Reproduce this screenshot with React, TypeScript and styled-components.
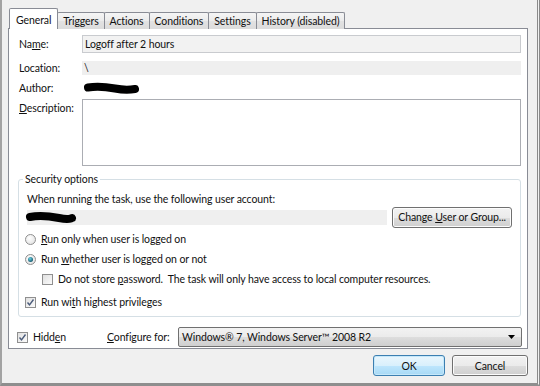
import styled, { createGlobalStyle } from "styled-components";

const GlobalStyle = createGlobalStyle`
  html, body { margin: 0; padding: 0; }
  body {
    font-family: Lato, "Noto Sans", sans-serif;
    font-size: 10.5px;
    letter-spacing: -0.1px;
    color: #111;
  }
  * { box-sizing: border-box; }
`;

const Frame = styled.div`
    width: 540px;
    height: 386px;
    background: #f0f0f0;
    border-left: 2px solid #a3a3a3;
    border-right: 3px double #8a8a8a;
    border-bottom: 3px solid #8e8e8e;
    padding-top: 8px;
    display: flex;
    flex-direction: column;
`;

const TabStrip = styled.div`
    display: flex;
    align-items: flex-end;
    height: 21px;
    margin-left: 7px;
`;

const Tab = styled.div<{ $active?: boolean }>`
    position: relative;
    height: ${(p) => (p.$active ? "21px" : "17px")};
    padding: ${(p) => (p.$active ? "1px 6px 0" : "0 5px")};
    margin-left: -1px;
    display: flex;
    align-items: center;
    border: 1px solid #898c95;
    border-bottom: none;
    border-radius: 2px 2px 0 0;
    background: ${(p) => (p.$active ? "#fff" : "linear-gradient(#f5f5f5, #ebebeb 50%, #e2e2e2 51%, #dcdcdc)")};
    z-index: ${(p) => (p.$active ? 2 : 1)};
    color: #111;
    white-space: nowrap;
    &:first-child { margin-left: 0; }
`;

const Panel = styled.div`
    position: relative;
    margin: -1px 0 0 6px;
    width: 520px;
    height: 321px;
    border: 1px solid #898c95;
    background: #fff;
    padding: 6px 6px 0 10px;
    display: flex;
    flex-direction: column;
`;

const FormRow = styled.div<{ $h: number; $mt?: number; $top?: boolean }>`
    display: grid;
    grid-template-columns: 63px 1fr;
    align-items: ${(p) => (p.$top ? "start" : "center")};
    height: ${(p) => p.$h}px;
    margin-top: ${(p) => p.$mt || 0}px;
`;

const Label = styled.label<{ $pt?: number }>`
    padding-top: ${(p) => p.$pt || 0}px;
    white-space: nowrap;
`;

const TextField = styled.div`
    height: 18px;
    border: 1px solid #c9cbcf;
    background: #f2f2f2;
    padding: 0 2px;
    display: flex;
    align-items: center;
`;

const ReadOnly = styled.div<{ $h: number }>`
    height: ${(p) => p.$h}px;
    background: #efefef;
    display: flex;
    align-items: center;
    padding: 0 2px;
`;

const TextArea = styled.div`
    height: 67px;
    border: 1px solid #abadb3;
    background: #fff;
`;

const Group = styled.fieldset`
    margin: 6px 0 0 -1px;
    border: 1px solid #d5dfe5;
    border-radius: 3px;
    padding: 0 8px 4px 8px;
    min-width: 0;
`;

const Legend = styled.legend`
    margin-left: -4px;
    padding: 0 2px;
    line-height: 15px;
`;

const Text = styled.div`
    line-height: 14px;
    margin-top: 5px;
    white-space: nowrap;
`;

const AccountRow = styled.div`
    display: flex;
    align-items: center;
    gap: 5px;
    height: 20px;
    margin: 1px 0 2px;
`;

const AccountField = styled.div`
    width: 361px;
    height: 15px;
    background: #efefef;
    display: flex;
    align-items: center;
`;

const Button = styled.div<{ $w: number; $default?: boolean }>`
    width: ${(p) => p.$w}px;
    height: 21px;
    display: flex;
    align-items: center;
    justify-content: center;
    border: 1px solid ${(p) => (p.$default ? "#3c7fb1" : "#707070")};
    border-radius: 3px;
    background: ${(p) =>
        p.$default
            ? "linear-gradient(#eaf6fd, #d9f0fc 50%, #bee6fd 51%, #a7d9f5)"
            : "linear-gradient(#f2f2f2, #ebebeb 50%, #dddddd 51%, #cfcfcf)"};
    box-shadow: inset 0 0 0 1px ${(p) => (p.$default ? "#c5e8fa" : "#fcfcfc")};
    white-space: nowrap;
`;

const OptionRow = styled.div<{ $indent?: number; $mt?: number }>`
    display: flex;
    align-items: center;
    gap: 5px;
    height: 20px;
    margin-left: ${(p) => (p.$indent ?? -2)}px;
    margin-top: ${(p) => p.$mt || 0}px;
    white-space: nowrap;
`;

const Radio = styled.span<{ $checked?: boolean }>`
    width: 11px;
    height: 11px;
    border-radius: 50%;
    border: 1px solid #8f8f8f;
    background: radial-gradient(circle at 40% 35%, #ffffff, #dcdcdc);
    display: flex;
    align-items: center;
    justify-content: center;
    flex: none;
    &::after {
        content: "";
        display: ${(p) => (p.$checked ? "block" : "none")};
        width: 5px;
        height: 5px;
        border-radius: 50%;
        background: radial-gradient(circle at 40% 35%, #6ad2e6, #1b5f73 70%);
    }
`;

const CheckBox = styled.span`
    width: 11px;
    height: 11px;
    border: 1px solid #8f8f8f;
    background: linear-gradient(135deg, #e0e0e0, #fbfbfb);
    display: flex;
    align-items: center;
    justify-content: center;
    flex: none;
`;

const BottomRow = styled.div`
    display: flex;
    align-items: center;
    height: 20px;
    margin-top: 10px;
`;

const HiddenBox = styled.div`
    width: 90px;
    margin-left: -2px;
    display: flex;
    align-items: center;
    gap: 5px;
`;

const ConfigLabel = styled.label`
    width: 71px;
    white-space: nowrap;
`;

const Select = styled.div`
    flex: 1;
    height: 20px;
    margin-right: -1px;
    border: 1px solid #707070;
    border-radius: 2px;
    background: linear-gradient(#f2f2f2, #ebebeb 50%, #dddddd 51%, #cfcfcf);
    display: flex;
    align-items: center;
    justify-content: space-between;
    padding: 0 6px 0 3px;
`;

const ButtonBar = styled.div`
    display: flex;
    justify-content: flex-end;
    gap: 7px;
    margin-top: 6px;
    padding-right: 9px;
`;

function Check({ checked }: { checked?: boolean }) {
    return (
        <CheckBox>
            {checked && (
                <svg width="9" height="9" viewBox="0 0 9 9">
                    <path d="M1.5 4.5 L3.5 6.8 L7.5 1.5" fill="none" stroke="#4a5b7a" strokeWidth="1.4" />
                </svg>
            )}
        </CheckBox>
    );
}

function Scribble({ width, d }: { width: number; d: string }) {
    return (
        <svg width={width} height="13" viewBox={`0 0 ${width} 13`}>
            <path d={d} fill="none" stroke="#000" strokeWidth="8" strokeLinecap="round" strokeLinejoin="round" />
        </svg>
    );
}

export default function App() {
    return (
        <>
            <GlobalStyle />
            <Frame>
                <TabStrip>
                    <Tab $active>General</Tab>
                    <Tab>Triggers</Tab>
                    <Tab>Actions</Tab>
                    <Tab>Conditions</Tab>
                    <Tab>Settings</Tab>
                    <Tab>History (disabled)</Tab>
                </TabStrip>
                <Panel>
                    <FormRow $h={18}>
                        <Label>Na<u>m</u>e:</Label>
                        <TextField>Logoff after 2 hours</TextField>
                    </FormRow>
                    <FormRow $h={14} $mt={8}>
                        <Label>Location:</Label>
                        <ReadOnly $h={14}>\</ReadOnly>
                    </FormRow>
                    <FormRow $h={16} $mt={5}>
                        <Label>Author:</Label>
                        <div style={{ paddingLeft: 1, display: "flex" }}>
                            <Scribble width={57} d="M5 5.5 C14 4, 24 5, 32 6.5 S46 8, 52 7" />
                        </div>
                    </FormRow>
                    <FormRow $h={67} $mt={3} $top>
                        <Label $pt={3}><u>D</u>escription:</Label>
                        <TextArea />
                    </FormRow>

                    <Group>
                        <Legend>Security options</Legend>
                        <Text>When running the task, use the following user account:</Text>
                        <AccountRow>
                            <AccountField>
                                <div style={{ marginLeft: -2, display: "flex" }}>
                                    <Scribble width={54} d="M5 6 C14 4, 24 5, 34 7 S44 8, 47 7" />
                                </div>
                            </AccountField>
                            <Button $w={120}><span>Change <u>U</u>ser or Group...</span></Button>
                        </AccountRow>
                        <OptionRow>
                            <Radio />
                            <span><u>R</u>un only when user is logged on</span>
                        </OptionRow>
                        <OptionRow>
                            <Radio $checked />
                            <span>Run <u>w</u>hether user is logged on or not</span>
                        </OptionRow>
                        <OptionRow $indent={15}>
                            <Check />
                            <span>Do not store <u>p</u>assword.&nbsp; The task will only have access to local computer resources.</span>
                        </OptionRow>
                        <OptionRow $mt={3}>
                            <Check checked />
                            <span>Run wi<u>t</u>h highest privileges</span>
                        </OptionRow>
                    </Group>

                    <BottomRow>
                        <HiddenBox>
                            <Check checked />
                            <span>Hidd<u>e</u>n</span>
                        </HiddenBox>
                        <ConfigLabel><u>C</u>onfigure for:</ConfigLabel>
                        <Select>
                            <span>Windows® 7, Windows Server™ 2008 R2</span>
                            <svg width="7" height="4" viewBox="0 0 7 4">
                                <path d="M0 0 H7 L3.5 4 Z" fill="#000" />
                            </svg>
                        </Select>
                    </BottomRow>
                </Panel>
                <ButtonBar>
                    <Button $w={72} $default>OK</Button>
                    <Button $w={76}>Cancel</Button>
                </ButtonBar>
            </Frame>
        </>
    );
}
